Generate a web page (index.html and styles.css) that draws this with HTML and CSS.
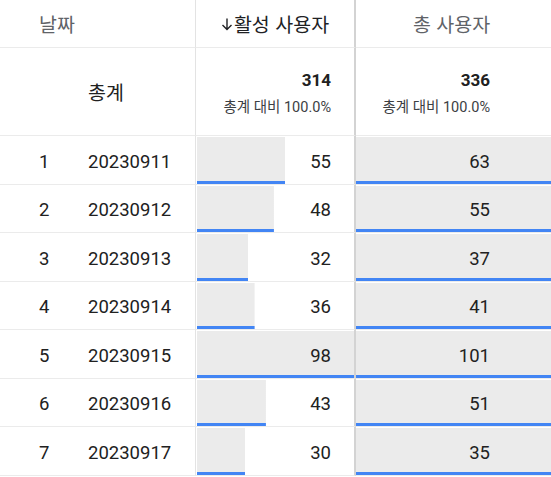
FILE: index.html
```html
<!DOCTYPE html>
<html lang="ko">
<head>
<meta charset="utf-8">
<link rel="stylesheet" href="styles.css">
</head>
<body>
<div class="table">
  <div class="cell head c1"><span class="h-date">날짜</span></div>
  <div class="cell head c2 sorted"><svg class="arrow" width="12" height="14" viewBox="0 0 12 14"><path d="M6 1.5V12.5M1.5 8L6 12.5L10.5 8" fill="none" stroke="#202124" stroke-width="1.4"/></svg>활성 사용자</div>
  <div class="cell head c3">총 사용자</div>

  <div class="cell total c1"><span class="total-label">총계</span></div>
  <div class="cell total c2"><div class="tot"><b>314</b><small>총계 대비 100.0%</small></div></div>
  <div class="cell total c3"><div class="tot tot3"><b>336</b><small>총계 대비 100.0%</small></div></div>

  <div class="cell row c1"><span class="idx">1</span><span class="date">20230911</span></div>
  <div class="cell row c2"><div class="bar" style="--w:56.1%">55</div></div>
  <div class="cell row c3"><div class="bar">63</div></div>

  <div class="cell row c1"><span class="idx">2</span><span class="date">20230912</span></div>
  <div class="cell row c2"><div class="bar" style="--w:49%">48</div></div>
  <div class="cell row c3"><div class="bar">55</div></div>

  <div class="cell row c1"><span class="idx">3</span><span class="date">20230913</span></div>
  <div class="cell row c2"><div class="bar" style="--w:32.7%">32</div></div>
  <div class="cell row c3"><div class="bar">37</div></div>

  <div class="cell row c1"><span class="idx">4</span><span class="date">20230914</span></div>
  <div class="cell row c2"><div class="bar" style="--w:36.7%">36</div></div>
  <div class="cell row c3"><div class="bar">41</div></div>

  <div class="cell row c1"><span class="idx">5</span><span class="date">20230915</span></div>
  <div class="cell row c2"><div class="bar" style="--w:100%">98</div></div>
  <div class="cell row c3"><div class="bar">101</div></div>

  <div class="cell row c1"><span class="idx">6</span><span class="date">20230916</span></div>
  <div class="cell row c2"><div class="bar" style="--w:43.9%">43</div></div>
  <div class="cell row c3"><div class="bar">51</div></div>

  <div class="cell row c1"><span class="idx">7</span><span class="date">20230917</span></div>
  <div class="cell row c2"><div class="bar" style="--w:30.6%">30</div></div>
  <div class="cell row c3"><div class="bar">35</div></div>
</div>
</body>
</html>
```
FILE: styles.css
```css
* { box-sizing: border-box; }
html, body { margin: 0; padding: 0; background: #fff; }
body {
  font-family: Roboto, "Noto Sans CJK KR", sans-serif;
  color: #212121;
  width: 551px;
  height: 477px;
  overflow: hidden;
}
.table {
  display: grid;
  grid-template-columns: 196px 160px 195px;
  grid-template-rows: 48px 88px repeat(7, 48.5px);
}
.cell {
  border-bottom: 1px solid #ebebeb;
  min-width: 0;
}
.c1 { border-right: 1px solid #e3e3e3; }
.c2 { border-right: 2px solid #d3d3d3; }

.head {
  display: flex;
  align-items: center;
  font-family: "Noto Sans CJK KR", Roboto, sans-serif;
  font-size: 19.5px;
  color: #5f6368;
  padding-bottom: 1px;
}
.head.c1 { padding-left: 39px; }
.head.c2 { justify-content: center; color: #202124; padding-left: 0; }
.head.c3 { justify-content: center; padding-right: 4px; }
.arrow { margin-right: 1px; margin-top: 1px; }

.total { display: flex; align-items: center; }
.total-label {
  font-family: "Noto Sans CJK KR", Roboto, sans-serif;
  font-size: 19.5px;
  padding-left: 88px;
  padding-bottom: 1px;
}
.tot {
  width: 100%;
  display: flex;
  flex-direction: column;
  align-items: flex-end;
  padding-right: 23px;
  padding-top: 3px;
}
.tot3 { padding-right: 61px; }
.tot b {
  font-weight: 700;
  font-size: 17px;
  line-height: 22px;
}
.tot small {
  font-family: Roboto, "Noto Sans CJK KR", sans-serif;
  font-size: 14.5px;
  line-height: 20px;
  margin-top: 7px;
  color: #3c4043;
}

.row {
  padding-top: 1px;
  font-size: 18.5px;
}
.row.c1 {
  display: flex;
  align-items: center;
  padding-top: 4px;
}
.idx { width: 88px; padding-left: 39px; }
.row.c2 { padding-left: 1px; }
.bar {
  --w: 100%;
  height: 100%;
  display: flex;
  align-items: center;
  justify-content: flex-end;
  padding-top: 3px;
  padding-right: 23px;
  background: linear-gradient(to top, #4285f4 3px, #ebebeb 3px) left top / var(--w) 100% no-repeat;
}
.row.c3 .bar { padding-right: 61px; }
```
